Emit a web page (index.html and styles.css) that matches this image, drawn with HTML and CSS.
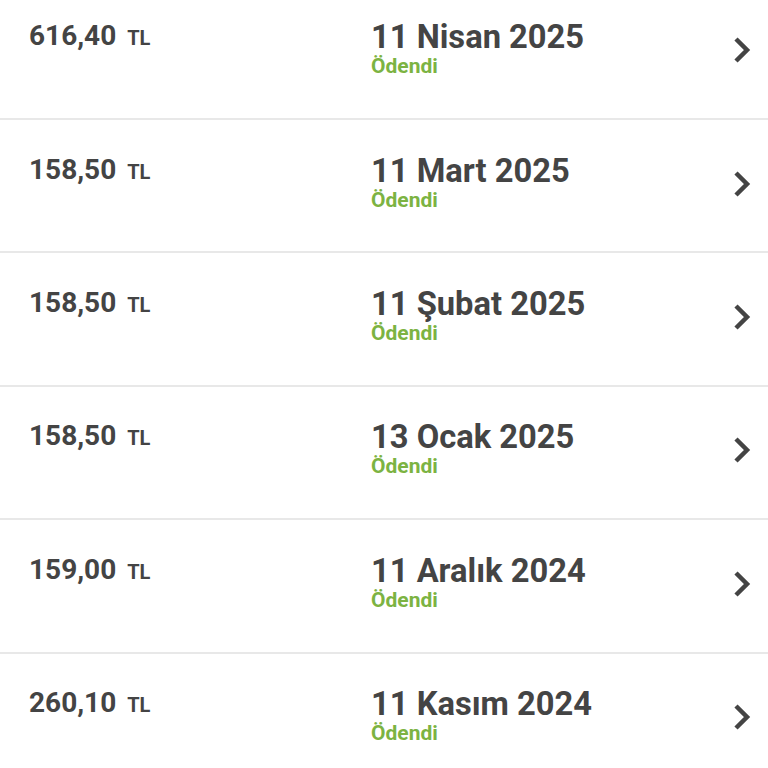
FILE: index.html
```html
<!DOCTYPE html>
<html lang="tr">
<head>
<meta charset="utf-8">
<link rel="stylesheet" href="styles.css">
</head>
<body>
<ul class="list">
  <li class="row"><div class="amount">616,40<span class="cur">TL</span></div><div class="info"><div class="date">11 Nisan 2025</div><div class="status">Ödendi</div></div><svg class="chev" viewBox="0 0 20 28"><path d="M4 3 L15 14 L4 25"/></svg></li>
  <li class="row"><div class="amount">158,50<span class="cur">TL</span></div><div class="info"><div class="date">11 Mart 2025</div><div class="status">Ödendi</div></div><svg class="chev" viewBox="0 0 20 28"><path d="M4 3 L15 14 L4 25"/></svg></li>
  <li class="row"><div class="amount">158,50<span class="cur">TL</span></div><div class="info"><div class="date">11 Şubat 2025</div><div class="status">Ödendi</div></div><svg class="chev" viewBox="0 0 20 28"><path d="M4 3 L15 14 L4 25"/></svg></li>
  <li class="row"><div class="amount">158,50<span class="cur">TL</span></div><div class="info"><div class="date">13 Ocak 2025</div><div class="status">Ödendi</div></div><svg class="chev" viewBox="0 0 20 28"><path d="M4 3 L15 14 L4 25"/></svg></li>
  <li class="row"><div class="amount">159,00<span class="cur">TL</span></div><div class="info"><div class="date">11 Aralık 2024</div><div class="status">Ödendi</div></div><svg class="chev" viewBox="0 0 20 28"><path d="M4 3 L15 14 L4 25"/></svg></li>
  <li class="row"><div class="amount">260,10<span class="cur">TL</span></div><div class="info"><div class="date">11 Kasım 2024</div><div class="status">Ödendi</div></div><svg class="chev" viewBox="0 0 20 28"><path d="M4 3 L15 14 L4 25"/></svg></li>
</ul>
</body>
</html>
```
FILE: styles.css
```css
html, body {
  margin: 0;
  padding: 0;
  background: #ffffff;
  overflow: hidden;
}
body {
  font-family: Roboto, "Noto Sans", sans-serif;
  color: #444444;
}
.list {
  list-style: none;
  margin: -13.4px 0 0 0;
  padding: 0;
}
.row {
  box-sizing: border-box;
  height: 133.4px;
  border-bottom: 2px solid #e8e8e8;
  display: grid;
  grid-template-columns: 342px 1fr auto;
  align-items: start;
  padding: 31.5px 16px 0 29px;
}
.amount {
  font-size: 28px;
  font-weight: 700;
  line-height: 32px;
  padding-top: 2px;
}
.cur {
  font-size: 20px;
  margin-left: 11px;
}
.info {
  display: flex;
  flex-direction: column;
}
.date {
  font-size: 32.7px;
  font-weight: 700;
  line-height: 34px;
  padding-top: 2px;
}
.status {
  font-size: 21px;
  font-weight: 700;
  color: #7cb342;
  line-height: 22px;
  margin-top: 1px;
}
.chev {
  width: 20px;
  height: 28px;
  margin-top: 18px;
  fill: none;
  stroke: #444444;
  stroke-width: 4.5;
}
```
